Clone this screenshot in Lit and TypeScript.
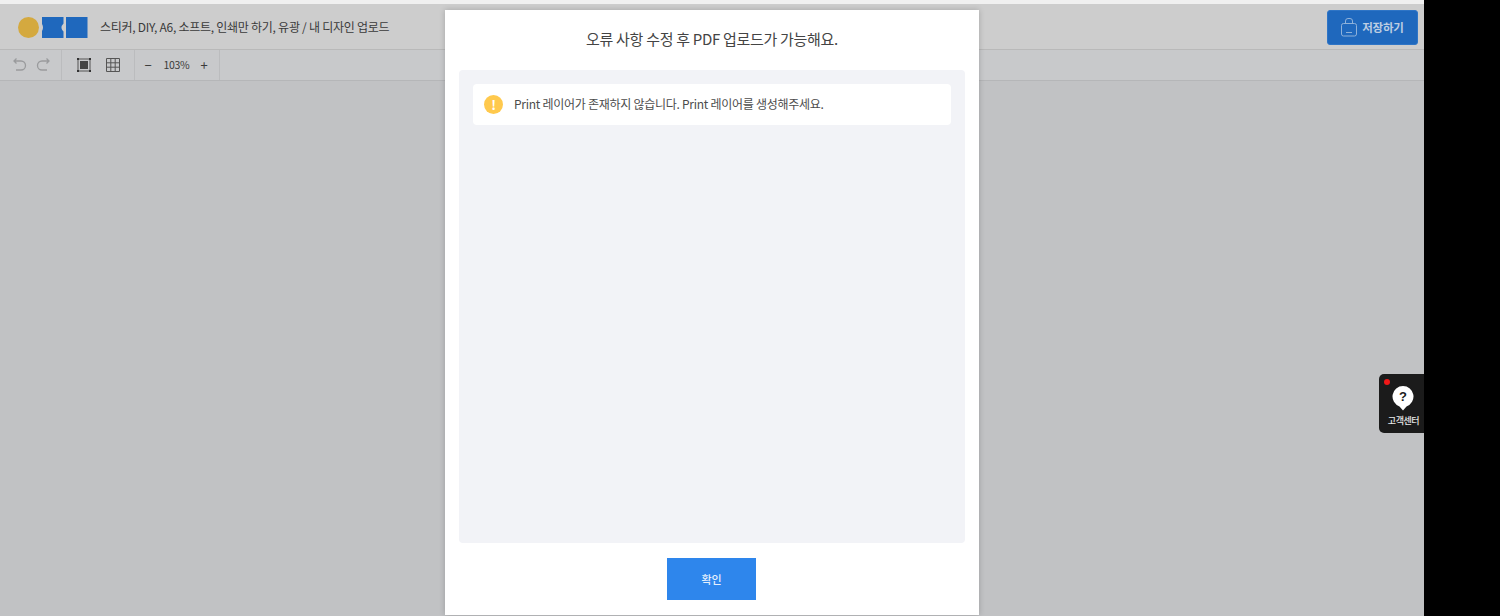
import { LitElement, html, css } from "lit";
import { customElement } from "lit/decorators.js";

@customElement("app-root")
export class AppRoot extends LitElement {
  static styles = css`
    :host { display: block; width: 1500px; height: 616px; position: relative; overflow: hidden; background: #000;
      font-family: "Noto Sans CJK KR", "Noto Sans", sans-serif; color: #333; }
    .main { width: 1424px; height: 616px; display: flex; flex-direction: column; background: #c1c2c4; }
    .strip { height: 4px; background: #f0f0f0; flex: none; }
    .header { height: 45px; flex: none; background: #cdcdcd; border-bottom: 1px solid #b9b9b9; display: flex; align-items: center; padding: 0 5px 0 18px; }
    .logo { display: flex; align-items: center; width: 82px; flex: none; padding-top: 2px; }
    .title { font-size: 12px; letter-spacing: -0.26px; color: #3a3a3a; flex: 1; }
    .save { width: 91px; height: 35px; box-sizing: border-box; margin: 1px 1px 0 0; border-radius: 3px; background: #1f68bd; color: #bccde2; font-size: 11.5px; font-weight: 700; letter-spacing: -0.2px; display: flex; align-items: center; justify-content: center; gap: 5px; border: 1px solid #2f75c6; }
    .toolbar { height: 30px; flex: none; background: #c8c9cb; border-bottom: 1px solid #b5b6b8; display: flex; }
    .group { display: flex; align-items: center; border-right: 1px solid #bbbcbe; box-sizing: border-box; padding-bottom: 1px; }
    .g1 { width: 62px; padding-left: 12px; gap: 9px; }
    .g2 { width: 73px; padding-left: 15px; gap: 15px; }
    .g3 { width: 85px; padding-left: 9px; font-size: 10.5px; color: #3a3a3a; }
    .pm { width: 8px; text-align: center; font-size: 13px; line-height: 1; }
    .pct { width: 47px; text-align: center; letter-spacing: -0.3px; padding-left: 1px; box-sizing: content-box; }
    .modal { position: absolute; left: 445px; top: 10px; width: 534px; height: 605px; background: #fff; box-shadow: 0 0 6px rgba(0,0,0,.2); display: flex; flex-direction: column; align-items: center; box-sizing: border-box; padding: 0 14px; }
    .modal h2 { margin: 0; height: 60px; flex: none; font-size: 15px; font-weight: 400; line-height: 58px; letter-spacing: -0.3px; color: #444; }
    .panel { align-self: stretch; flex: none; height: 473px; background: #f2f3f7; border-radius: 4px; padding: 14px; box-sizing: border-box; }
    .item { height: 41px; background: #fff; border-radius: 4px; display: flex; align-items: center; gap: 11px; padding: 0 11px; font-size: 12px; letter-spacing: -0.27px; color: #4c4c4c; }
    .msg { position: relative; top: -1px; }
    .warn { width: 19px; height: 19px; border-radius: 50%; background: #ffc94d; color: #fff; font-size: 13px; font-weight: 700; display: flex; align-items: center; justify-content: center; flex: none; line-height: 1; }
    .ok { margin: 15px 1px 0 0; width: 89px; height: 42px; background: #2e86ec; color: #e4f0fd; font-size: 11px; font-weight: 500; border: 0; padding: 0; font-family: inherit; display: flex; align-items: center; justify-content: center; }
    .help { position: absolute; left: 1379px; top: 374px; width: 45px; height: 59px; background: #1b1b1b; border-radius: 5px 0 0 5px; display: flex; flex-direction: column; align-items: center; }
    .dot { position: absolute; left: 5px; top: 5px; width: 6px; height: 6px; border-radius: 50%; background: #f01818; }
    .help svg { margin: 12px 0 0 3px; flex: none; }
    .help span { color: #e8e8e8; font-size: 9px; font-weight: 500; letter-spacing: -0.45px; margin: 3px 0 0 4px; line-height: 13px; white-space: nowrap; }
  `;

  render() {
    return html`
      <div class="main">
        <div class="strip"></div>
        <div class="header">
          <div class="logo">
            <svg width="70" height="21" viewBox="0 0 70 21">
              <circle cx="10.5" cy="10.5" r="10.5" fill="#d4a93f" />
              <path d="M24 0H45.500V6.500Q41.500 10.500 45.500 14.500V21H24V14Q26 10.500 24 7Z" fill="#1f68bd" />
              <rect x="48" y="0" width="21.5" height="21" fill="#1f68bd" />
            </svg>
          </div>
          <div class="title">스티커, DIY, A6, 소프트, 인쇄만 하기, 유광 / 내 디자인 업로드</div>
          <div class="save">
            <svg width="16" height="19" viewBox="0 0 16 19" fill="none" stroke="#8fb2da" stroke-width="1">
              <rect x=".5" y="5.500" width="15" height="12.500" rx="2" />
              <path d="M4.500 5.500V3A2.500 2.500 0 0 1 7 .5h2A2.500 2.500 0 0 1 11.500 3V5.500M5 14.500h6" />
            </svg>
            저장하기
          </div>
        </div>
        <div class="toolbar">
          <div class="group g1">
            <svg width="15" height="15" viewBox="0 0 15 15" fill="none" stroke="#9a9b9d" stroke-width="1.3"><path d="M4.500 1.500L2 4l2.500 2.500M2.500 4H9a4.500 4.500 0 0 1 0 9H4" /></svg>
            <svg width="15" height="15" viewBox="0 0 15 15" fill="none" stroke="#9a9b9d" stroke-width="1.3"><path d="M10.500 1.500L13 4l-2.500 2.500M12.500 4H6a4.500 4.500 0 0 0 0 9h5" /></svg>
          </div>
          <div class="group g2">
            <svg width="14" height="14" viewBox="0 0 14 14"><rect x="1" y="1" width="12" height="12" fill="none" stroke="#555" /><rect x="3" y="3" width="8" height="8" fill="#444" /><path d="M0 0h2v2H0zM12 0h2v2h-2zM0 12h2v2H0zM12 12h2v2h-2z" fill="#333" /></svg>
            <svg width="14" height="14" viewBox="0 0 14 14" fill="none" stroke="#555"><path d="M.5.5h13v13H.5zM.5 4.800h13M.5 9.200h13M4.800.5v13M9.200.5v13" /></svg>
          </div>
          <div class="group g3">
            <span class="pm">−</span><span class="pct">103%</span><span class="pm">+</span>
          </div>
        </div>
      </div>
      <div class="modal">
        <h2>오류 사항 수정 후 PDF 업로드가 가능해요.</h2>
        <div class="panel">
          <div class="item"><span class="warn">!</span><span class="msg">Print 레이어가 존재하지 않습니다. Print 레이어를 생성해주세요.</span></div>
        </div>
        <button class="ok">확인</button>
      </div>
      <div class="help">
        <i class="dot"></i>
        <svg width="24" height="25" viewBox="0 0 24 25">
          <path d="M12 0a10.500 10.500 0 0 1 3.500 20.400L12 24.500 8.500 20.400A10.500 10.500 0 0 1 12 0Z" fill="#fff" />
          <text x="12" y="15" text-anchor="middle" font-size="13" font-weight="700" fill="#1b1b1b" font-family="Liberation Sans, sans-serif">?</text>
        </svg>
        <span>고객센터</span>
      </div>
    `;
  }
}
